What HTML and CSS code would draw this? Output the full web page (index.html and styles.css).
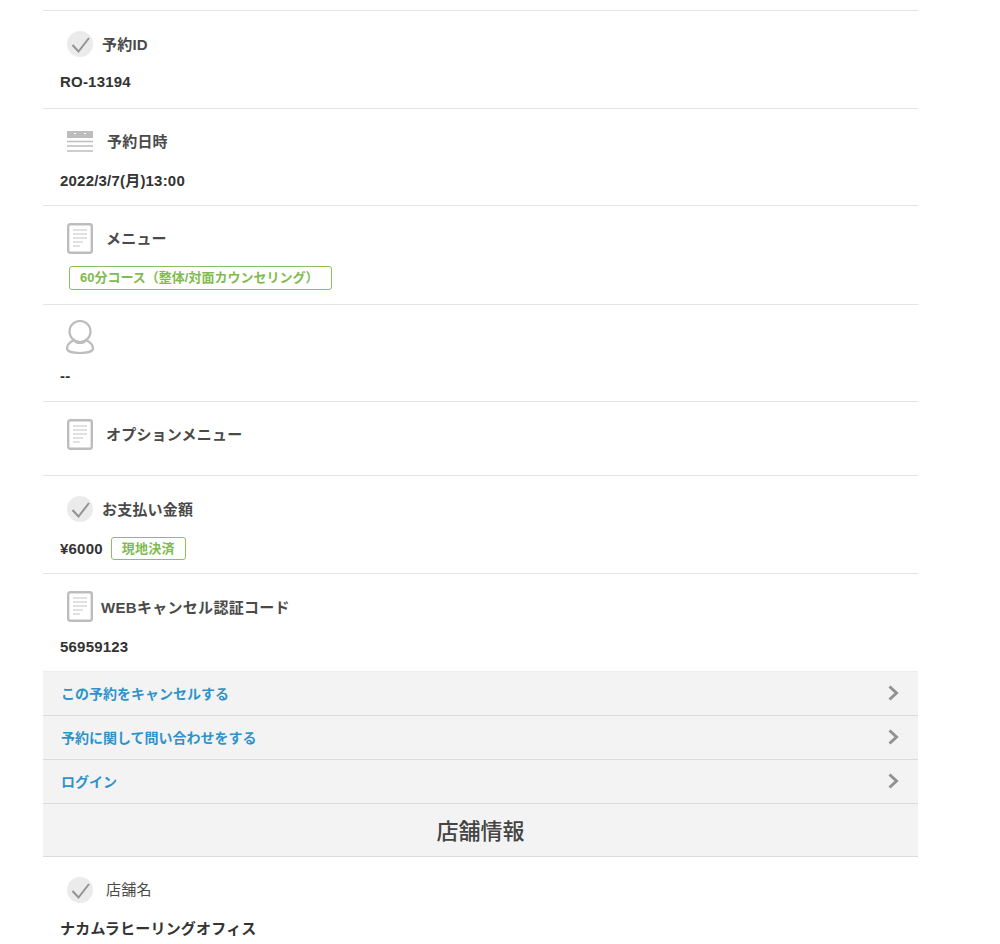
FILE: index.html
```html
<!DOCTYPE html>
<html lang="ja">
  <head>
    <meta charset="utf-8" />
    <title>予約詳細</title>
    <meta name="viewport" content="width=device-width, initial-scale=1.0" />
    <link rel="stylesheet" href="styles.css">
  </head>
  <body>
    <svg class="sprites" aria-hidden="true">
      <symbol id="icon-check" viewBox="0 0 26 26">
        <circle cx="13" cy="13" r="13" fill="#ebebeb" />
        <path d="M5.500 14l6 6.500 10.500-13.500" fill="none" stroke="#939393" stroke-width="2" />
      </symbol>
      <symbol id="icon-date" viewBox="0 0 28 22">
        <rect x="1" y="0" width="26" height="7" fill="#bdbdbd" />
        <rect x="8" y="2" width="2" height="1" fill="#fff" />
        <rect x="18" y="2" width="2" height="1" fill="#fff" />
        <path d="M1 10.500h26M1 15h26M1 20h26" stroke="#bdbdbd" stroke-width="1.600" />
      </symbol>
      <symbol id="icon-doc" viewBox="0 0 26 31">
        <rect x="1.200" y="1.200" width="23.600" height="28.600" rx="2" fill="#fff" stroke="#bdbdbd" stroke-width="2.400" />
        <path d="M6 7h14M6 11h14M6 15h14M6 19h10M6 23h7" stroke="#c4c4c4" stroke-width="1.200" />
      </symbol>
      <symbol id="icon-person" viewBox="0 0 28 34">
        <circle cx="14" cy="11.500" r="10.500" fill="none" stroke="#bdbdbd" stroke-width="2.200" />
        <path d="M8 20c-4 2-7 5-7 8.500 0 3 6 4.500 13 4.500s13-1.500 13-4.500c0-3.500-3-6.500-7-8.500-2 4-10 4-12 0z" fill="none" stroke="#bdbdbd" stroke-width="2.200" />
      </symbol>
    </svg>

    <main class="wrap">
      <section class="row">
        <div class="row-head">
          <svg class="icon icon-check"><use href="#icon-check" /></svg>
          <h3 class="label label-near">予約ID</h3>
        </div>
        <p class="value">RO-13194</p>
      </section>

      <section class="row row-short">
        <div class="row-head">
          <svg class="icon icon-date"><use href="#icon-date" /></svg>
          <h3 class="label">予約日時</h3>
        </div>
        <p class="value">2022/3/7(月)13:00</p>
      </section>

      <section class="row row-menu">
        <div class="row-head">
          <svg class="icon icon-doc"><use href="#icon-doc" /></svg>
          <h3 class="label">メニュー</h3>
        </div>
        <p class="value value-tag"><span class="tag tag-menu">60分コース（整体/対面カウンセリング）</span></p>
      </section>

      <section class="row row-short">
        <div class="row-head">
          <svg class="icon icon-person"><use href="#icon-person" /></svg>
        </div>
        <p class="value">--</p>
      </section>

      <section class="row row-empty">
        <div class="row-head">
          <svg class="icon icon-doc"><use href="#icon-doc" /></svg>
          <h3 class="label">オプションメニュー</h3>
        </div>
      </section>

      <section class="row">
        <div class="row-head">
          <svg class="icon icon-check"><use href="#icon-check" /></svg>
          <h3 class="label label-near">お支払い金額</h3>
        </div>
        <p class="value value-tag">¥6000<span class="tag tag-pay">現地決済</span></p>
      </section>

      <section class="row">
        <div class="row-head">
          <svg class="icon icon-doc"><use href="#icon-doc" /></svg>
          <h3 class="label label-nearest">WEBキャンセル認証コード</h3>
        </div>
        <p class="value value-tag">56959123</p>
      </section>

      <nav class="links">
        <a class="link" href="#">この予約をキャンセルする<svg class="chevron" viewBox="0 0 11 16"><path d="M1.500 1.500l7 6.500-7 6.500" /></svg></a>
        <a class="link" href="#">予約に関して問い合わせをする<svg class="chevron" viewBox="0 0 11 16"><path d="M1.500 1.500l7 6.500-7 6.500" /></svg></a>
        <a class="link" href="#">ログイン<svg class="chevron" viewBox="0 0 11 16"><path d="M1.500 1.500l7 6.500-7 6.500" /></svg></a>
      </nav>

      <h2 class="section-title">店舗情報</h2>

      <section class="row row-last">
        <div class="row-head">
          <svg class="icon icon-check"><use href="#icon-check" /></svg>
          <h3 class="label label-plain">店舗名</h3>
        </div>
        <p class="value">ナカムラヒーリングオフィス</p>
      </section>
    </main>
  </body>
</html>
```

FILE: styles.css
```css
html,
body {
  height: 100%;
  overflow: hidden;
}

body {
  margin: 0;
  padding-top: 10px;
  box-sizing: border-box;
  background: #fff;
  color: #444;
  font-family: "Liberation Sans", "Noto Sans CJK JP", sans-serif;
  font-size: 15px;
}

.sprites {
  display: none;
}

.wrap {
  width: 875px;
  margin-left: 43px;
}

/* one block of the reservation */
.row {
  box-sizing: border-box;
  height: 98px;
  border-top: 1px solid #e4e4e4;
  padding-left: 17px;
  padding-top: 13px;
}

.row-short {
  height: 97px;
}

.row-menu {
  height: 99px;
}

.row-empty {
  height: 74px;
}

.row-last {
  border-top: 0;
  height: auto;
}

.row-head {
  display: flex;
  align-items: center;
  height: 40px;
  padding-left: 7px;
}

.icon {
  display: block;
  flex: none;
}

.icon-check {
  width: 26px;
  height: 26px;
}

.icon-date {
  width: 28px;
  height: 22px;
  margin-left: -1px;
}

.icon-doc {
  width: 26px;
  height: 31px;
  margin-bottom: 1px;
}

.icon-person {
  width: 28px;
  height: 34px;
  margin-left: -1px;
  margin-bottom: 2px;
}

.label {
  margin: 0 0 3px 13px;
  font-size: 15px;
  font-weight: 700;
  letter-spacing: 0.2px;
  color: #4a4a4a;
}

.label-near {
  margin-left: 9px;
  margin-bottom: 1px;
}

.label-nearest {
  margin-left: 8px;
  margin-bottom: 1px;
  letter-spacing: 0.3px;
}

.label-plain {
  margin-left: 13px;
  font-weight: 400;
}

.value {
  box-sizing: border-box;
  display: flex;
  align-items: center;
  height: 36px;
  margin: 0;
  padding-bottom: 2px;
  font-size: 15px;
  font-weight: 700;
  letter-spacing: 0.2px;
  color: #333;
}

.value-tag {
  padding-top: 2px;
  padding-bottom: 0;
}

.tag {
  box-sizing: border-box;
  display: block;
  border: 1px solid #8cc05c;
  border-radius: 3px;
  color: #80bb50;
  font-size: 13px;
  font-weight: 700;
  letter-spacing: 0;
  line-height: 22px;
}

.tag-menu {
  width: 263px;
  margin-left: 9px;
  padding-left: 10px;
  height: 24px;
  white-space: nowrap;
}

.tag-pay {
  width: 75px;
  height: 23px;
  margin-left: 8px;
  text-align: center;
  letter-spacing: 0.2px;
  line-height: 21px;
}

.links {
  display: block;
}

.link {
  display: flex;
  align-items: center;
  justify-content: space-between;
  box-sizing: border-box;
  height: 44px;
  padding: 0 19px 2px 18px;
  border-top: 1px solid #dcdcdc;
  background: #f3f3f3;
  color: #2f93cb;
  font-size: 14px;
  font-weight: 700;
  text-decoration: none;
}

.link:first-child {
  border-top-color: #ececec;
}

.chevron {
  width: 11px;
  height: 16px;
  fill: none;
  stroke: #929292;
  stroke-width: 3;
}

.section-title {
  box-sizing: border-box;
  height: 54px;
  margin: 0;
  border-top: 1px solid #dcdcdc;
  border-bottom: 1px solid #dcdcdc;
  background: #f3f3f3;
  color: #444;
  font-size: 22px;
  font-weight: 500;
  line-height: 55px;
  text-align: center;
}
```
